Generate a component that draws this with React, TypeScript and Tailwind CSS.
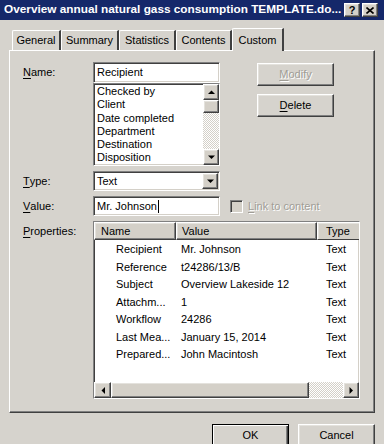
import React from "react";

const sunken =
  "border border-t-[#808080] border-l-[#808080] border-b-white border-r-white shadow-[inset_1px_1px_0_#404040,inset_-1px_-1px_0_#d4d0c8]";
const raised =
  "border border-t-white border-l-white border-b-[#404040] border-r-[#404040] shadow-[inset_-1px_-1px_0_#808080,inset_1px_1px_0_#e4e2dd]";
const dither =
  "bg-[image:repeating-conic-gradient(#ffffff_0%_25%,#d4d0c8_0%_50%)] bg-size-[2px_2px]";
const disabledText = "text-[#a09d96] [text-shadow:1px_1px_0_#ffffff]";

function Arrow({ dir }: { dir: "up" | "down" | "left" | "right" }) {
  const pts = {
    up: "0,4 7,4 3.5,0.5",
    down: "0,0.5 7,0.5 3.5,4",
    left: "4,0 4,7 0.5,3.5",
    right: "0.5,0 0.5,7 4,3.5",
  }[dir];
  const vertical = dir === "up" || dir === "down";
  return (
    <svg width={vertical ? 7 : 4} height={vertical ? 4 : 7} viewBox={vertical ? "0 0 7 4" : "0 0 4 7"}>
      <polygon points={pts} fill="#000" />
    </svg>
  );
}

function ScrollBtn({ dir, className = "" }: { dir: "up" | "down" | "left" | "right"; className?: string }) {
  return (
    <div className={`${raised} bg-[#d4d0c8] flex items-center justify-center shrink-0 ${className}`}>
      <Arrow dir={dir} />
    </div>
  );
}

function U({ children }: { children: React.ReactNode }) {
  return <span className="underline underline-offset-[2px]">{children}</span>;
}

const tabs = [
  { label: "General", w: "w-[49px]" },
  { label: "Summary", w: "w-[58px]" },
  { label: "Statistics", w: "w-[57px]" },
  { label: "Contents", w: "w-[56px]" },
];

const listItems = ["Checked by", "Client", "Date completed", "Department", "Destination", "Disposition"];

const props = [
  ["Recipient", "Mr. Johnson"],
  ["Reference", "t24286/13/B"],
  ["Subject", "Overview Lakeside 12"],
  ["Attachm...", "1"],
  ["Workflow", "24286"],
  ["Last Mea...", "January 15, 2014"],
  ["Prepared...", "John Macintosh"],
];

export default function App() {
  return (
    <div className="w-[384px] h-[444px] overflow-hidden bg-[#d6d3cd] font-['Liberation_Sans',Arial,sans-serif] text-[11px] text-black">
      {/* Title bar */}
      <div className="h-[20px] bg-[#15286a] flex items-center pl-[4px] pr-[6px]">
        <span className="flex-1 text-white font-bold text-[11.8px] whitespace-nowrap overflow-hidden">
          Overview annual natural gass consumption TEMPLATE.do...
        </span>
        <div className="flex gap-[2px]">
          <div className={`${raised} bg-[#d4d0c8] w-[16px] h-[14px] flex items-center justify-center font-bold text-[11px] leading-none`}>?</div>
          <div className={`${raised} bg-[#d4d0c8] w-[16px] h-[14px] flex items-center justify-center`}>
            <svg width="8" height="7" viewBox="0 0 8 7">
              <path d="M0.5 0.5 L7.5 6.5 M7.5 0.5 L0.5 6.5" stroke="#000" strokeWidth="1.6" />
            </svg>
          </div>
        </div>
      </div>

      {/* Tabs */}
      <div className="mt-[8px] px-[9px]">
        <div className="flex items-end h-[22px] pl-[3px] relative z-10">
          {tabs.map((t) => (
            <div
              key={t.label}
              className={`${t.w} h-[20px] border-l border-t border-l-white border-t-white border-r-2 border-r-[#404040] rounded-tl-[2px] flex items-center justify-center pb-[1px]`}
            >
              {t.label}
            </div>
          ))}
          <div className="w-[52px] h-[23px] -mb-[1px] bg-[#d6d3cd] border-l border-t border-l-white border-t-white border-r-2 border-r-[#404040] rounded-tl-[2px] flex items-start justify-center pt-[3px]">
            Custom
          </div>
        </div>

        {/* Panel */}
        <div className="h-[363px] border-l border-t border-l-white border-t-white border-r border-b border-r-[#404040] border-b-[#404040] shadow-[inset_-1px_-1px_0_#808080] pt-[11px] pl-[13px]">
          {/* Name block */}
          <div className="flex">
            <div className="w-[70px] h-[20px] flex items-center">
              <U>N</U>ame:
            </div>
            <div className="w-[127px] flex flex-col">
              <div className={`${sunken} bg-white h-[21px] flex items-center pl-[3px]`}>Recipient</div>
              <div className={`${sunken} bg-white h-[83px] flex`}>
                <div className="flex-1 pt-[1px] pl-[3px] leading-[13.3px] overflow-hidden">
                  {listItems.map((i) => (
                    <div key={i}>{i}</div>
                  ))}
                </div>
                <div className="w-[16px] flex flex-col">
                  <ScrollBtn dir="up" className="h-[16px]" />
                  <div className={`${raised} bg-[#d4d0c8] h-[13px]`} />
                  <div className={`flex-1 ${dither}`} />
                  <ScrollBtn dir="down" className="h-[16px]" />
                </div>
              </div>
            </div>
            <div className="ml-[37px] pt-[1px] flex flex-col gap-[8px]">
              <div className={`${raised} w-[77px] h-[23px] flex items-center justify-center ${disabledText}`}>
                <U>M</U>odify
              </div>
              <div className={`${raised} w-[77px] h-[23px] flex items-center justify-center`}>
                <U>D</U>elete
              </div>
            </div>
          </div>

          {/* Type */}
          <div className="flex mt-[5px]">
            <div className="w-[70px] h-[20px] flex items-center">
              <U>T</U>ype:
            </div>
            <div className={`${sunken} bg-white w-[127px] h-[20px] flex items-center pl-[3px] pr-[1px]`}>
              <span className="flex-1">Text</span>
              <ScrollBtn dir="down" className="w-[16px] h-[16px]" />
            </div>
          </div>

          {/* Value */}
          <div className="flex mt-[5px] items-center">
            <div className="w-[70px] h-[20px] flex items-center">
              <U>V</U>alue:
            </div>
            <div className={`${sunken} bg-white w-[127px] h-[20px] flex items-center pl-[3px]`}>
              Mr. Johnson
              <span className="inline-block w-[1px] h-[13px] bg-black ml-[1px]" />
            </div>
            <div className={`${sunken} bg-[#d4d0c8] w-[13px] h-[13px] ml-[10px]`} />
            <span className={`ml-[5px] ${disabledText}`}>
              <U>L</U>ink to content
            </span>
          </div>

          {/* Properties */}
          <div className="flex mt-[5px]">
            <div className="w-[70px] h-[20px] flex items-center">
              <U>P</U>roperties:
            </div>
            <div className={`${sunken} bg-white w-[267px] h-[178px] flex flex-col overflow-hidden`}>
              <div className="flex h-[18px] shrink-0">
                <div className={`${raised} bg-[#d4d0c8] w-[82px] flex items-center pl-[6px]`}>Name</div>
                <div className={`${raised} bg-[#d4d0c8] w-[141px] flex items-center pl-[5px]`}>Value</div>
                <div className={`${raised} bg-[#d4d0c8] flex-1 flex items-center pl-[8px] border-r-0 shadow-[inset_1px_1px_0_#e4e2dd]`}>Type</div>
              </div>
              <div className="flex-1 leading-[17.5px] pt-[1px]">
                {props.map(([n, v]) => (
                  <div key={n} className="flex whitespace-nowrap">
                    <div className="w-[82px] pl-[22px]">{n}</div>
                    <div className="w-[141px] pl-[5px]">{v}</div>
                    <div className="flex-1 pl-[9px]">Text</div>
                  </div>
                ))}
              </div>
              <div className="flex h-[16px] shrink-0">
                <ScrollBtn dir="left" className="w-[17px]" />
                <div className={`${raised} bg-[#d4d0c8] w-[198px]`} />
                <div className={`flex-1 ${dither}`} />
                <ScrollBtn dir="right" className="w-[16px]" />
              </div>
            </div>
          </div>
        </div>
      </div>

      {/* Bottom buttons */}
      <div className="flex justify-end gap-[9px] pr-[9px] mt-[11px]">
        <div className="w-[77px] h-[23px] border border-black shadow-[inset_1px_1px_0_#ffffff,inset_-1px_-1px_0_#404040,inset_-2px_-2px_0_#808080] flex items-center justify-center">
          OK
        </div>
        <div className={`${raised} w-[77px] h-[23px] flex items-center justify-center`}>Cancel</div>
      </div>
    </div>
  );
}
